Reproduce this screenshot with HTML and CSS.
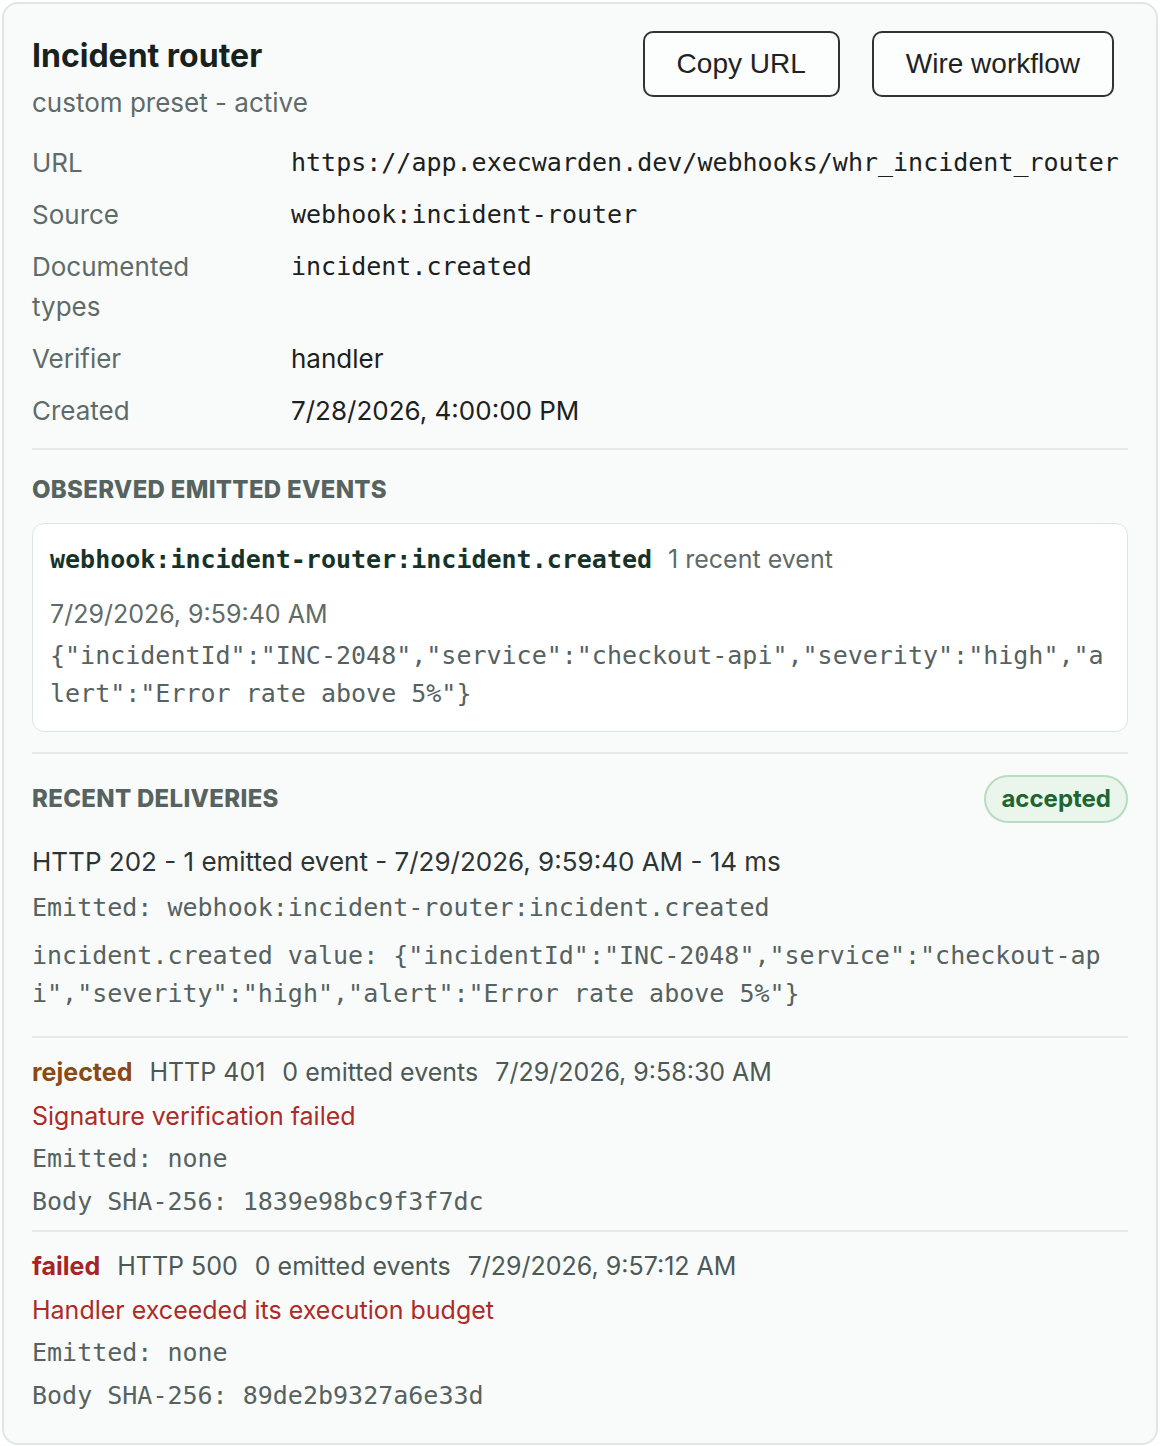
FILE: index.html
```html
<!DOCTYPE html>
<html>

<head>
    <meta name="viewport" content="width=device-width, initial-scale=1">
    <link rel="stylesheet" href="styles.css">
</head>

<body>

    <div class="card">
        <div class="header">
            <div class="heading">
                <h2 class="title">Incident router</h2>
                <div class="subtitle">custom preset - active</div>
            </div>
            <div class="actions">
                <button type="button">Copy URL</button>
                <button type="button">Wire workflow</button>
            </div>
        </div>

        <div class="details">
            <div class="label">URL</div>
            <div class="value mono">https://app.execwarden.dev/webhooks/whr_incident_router</div>
            <div class="label">Source</div>
            <div class="value mono">webhook:incident-router</div>
            <div class="label">Documented types</div>
            <div class="value mono">incident.created</div>
            <div class="label">Verifier</div>
            <div class="value">handler</div>
            <div class="label">Created</div>
            <div class="value">7/28/2026, 4:00:00 PM</div>
        </div>

        <div class="section">
            <h3 class="section-title">Observed emitted events</h3>
            <div class="event">
                <div class="event-head">
                    <span class="event-name">webhook:incident-router:incident.created</span>
                    <span class="muted">1 recent event</span>
                </div>
                <div class="event-date">7/29/2026, 9:59:40 AM</div>
                <div class="event-body mono">{"incidentId":"INC-2048","service":"checkout-api","severity":"high","alert":"Error rate above 5%"}</div>
            </div>
        </div>

        <div class="section">
            <div class="section-head">
                <h3 class="section-title">Recent deliveries</h3>
                <span class="pill">accepted</span>
            </div>

            <div class="delivery">
                <div class="summary">HTTP 202 - 1 emitted event - 7/29/2026, 9:59:40 AM - 14 ms</div>
                <div class="mono-line mono">Emitted: webhook:incident-router:incident.created</div>
                <div class="mono-line value-dump mono">incident.created value: {"incidentId":"INC-2048","service":"checkout-api","severity":"high","alert":"Error rate above 5%"}</div>
            </div>

            <div class="delivery">
                <div class="meta">
                    <span class="status rejected">rejected</span>
                    <span>HTTP 401</span>
                    <span>0 emitted events</span>
                    <span>7/29/2026, 9:58:30 AM</span>
                </div>
                <div class="error">Signature verification failed</div>
                <div class="mono-line mono">Emitted: none</div>
                <div class="mono-line mono">Body SHA-256: 1839e98bc9f3f7dc</div>
            </div>

            <div class="delivery">
                <div class="meta">
                    <span class="status failed">failed</span>
                    <span>HTTP 500</span>
                    <span>0 emitted events</span>
                    <span>7/29/2026, 9:57:12 AM</span>
                </div>
                <div class="error">Handler exceeded its execution budget</div>
                <div class="mono-line mono">Emitted: none</div>
                <div class="mono-line mono">Body SHA-256: 89de2b9327a6e33d</div>
            </div>
        </div>
    </div>

</body>

</html>
```

FILE: styles.css
```css
body {
    margin: 2px;
    background: #ffffff;
    font-family: Inter, "Noto Sans", sans-serif;
    font-size: 26px;
    line-height: 40px;
    color: #1c2120;
}

.mono {
    font-family: "DejaVu Sans Mono", "Liberation Mono", monospace;
    font-size: 25px;
}

.card {
    border: 2px solid #dfe7e5;
    border-radius: 16px;
    background: #f9fbfb;
    padding: 27px 28px 28px 28px;
}

.header {
    display: flex;
    justify-content: space-between;
    align-items: flex-start;
}

.heading {
    margin-top: 7px;
}

.title {
    margin: 0;
    font-size: 32px;
    line-height: 36px;
    font-weight: 700;
    color: #17211e;
}

.subtitle {
    margin-top: 9px;
    color: #5f6b68;
}

.actions {
    display: flex;
    gap: 32px;
    margin-right: 14px;
}

button {
    height: 66px;
    padding: 0 32px;
    border: 2px solid #333333;
    border-radius: 10px;
    background: #fcfdfd;
    font-family: "Liberation Sans", Arial, sans-serif;
    font-size: 28px;
    color: #222222;
    cursor: pointer;
}

.details {
    display: grid;
    grid-template-columns: 200px 1fr;
    column-gap: 59px;
    row-gap: 12px;
    margin-top: 20px;
    padding-bottom: 17px;
}

.label {
    color: #5f6b68;
}

.value {
    color: #1c2120;
}

.section {
    border-top: 2px solid #e2e9e7;
}

.section-title {
    margin: 0;
    font-size: 24px;
    line-height: 30px;
    font-weight: 800;
    letter-spacing: 0.3px;
    text-transform: uppercase;
    color: #56635f;
}

.section > .section-title {
    margin-top: 25px;
}

.event {
    margin-top: 18px;
    margin-bottom: 20px;
    padding: 15px 17px 18px 17px;
    background: #ffffff;
    border: 1px solid #dde6e3;
    border-radius: 12px;
}

.event-head {
    display: flex;
    align-items: baseline;
    gap: 16px;
}

.event-name {
    font-family: "DejaVu Sans Mono", monospace;
    font-size: 25px;
    font-weight: 700;
    color: #16332a;
}

.muted {
    font-size: 25px;
    color: #5f6b68;
}

.event-date {
    margin-top: 14px;
    font-size: 25px;
    color: #5f6b68;
}

.event-body {
    margin-top: 3px;
    line-height: 38px;
    color: #56625f;
    word-break: break-all;
}

.section-head {
    display: flex;
    justify-content: space-between;
    align-items: center;
    margin-top: 21px;
}

.pill {
    height: 44px;
    padding: 0 15px;
    border: 2px solid #b8dcbf;
    border-radius: 24px;
    background: #eaf6ec;
    color: #1d6630;
    font-size: 24px;
    line-height: 44px;
    font-weight: 700;
}

.delivery {
    padding: 14px 0 9px 0;
    border-top: 2px solid #e2e9e7;
}

.section-head + .delivery {
    border-top: none;
    padding-top: 19px;
    padding-bottom: 23px;
}

.section-head + .delivery .mono-line {
    margin-top: 7px;
}

.section-head + .delivery .value-dump {
    margin-top: 10px;
}

.summary {
    color: #2c3532;
}

.mono-line {
    margin-top: 4px;
    line-height: 38px;
    color: #56625f;
}

.mono-line + .mono-line {
    margin-top: 5px;
}

.value-dump {
    word-break: break-all;
}

.meta {
    display: flex;
    gap: 17px;
    font-size: 25px;
    color: #4d5955;
}

.status {
    font-weight: 700;
}

.rejected {
    color: #8b4a14;
}

.failed {
    color: #a82323;
}

.error {
    margin-top: 4px;
    font-size: 25px;
    color: #ae2a27;
}

.delivery:last-child {
    padding-bottom: 0;
}
```
